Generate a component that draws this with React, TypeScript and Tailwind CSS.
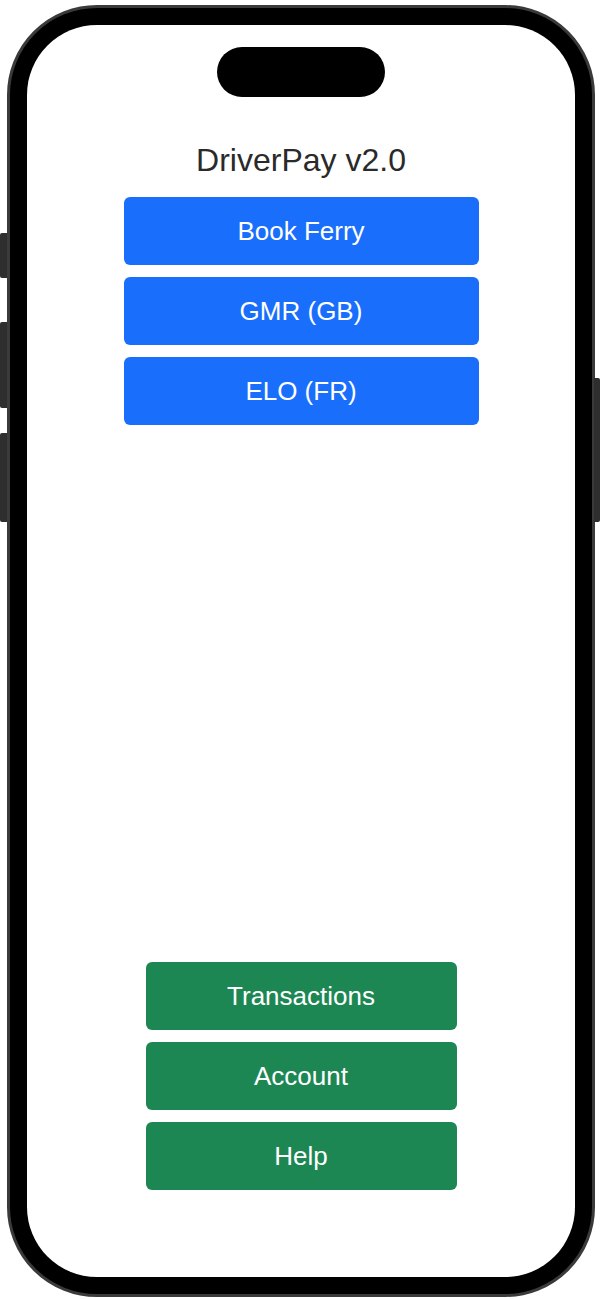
import React from "react";

const font = { fontFamily: '"Liberation Sans", Arial, sans-serif' };

function Btn({ label, color, width }: { label: string; color: string; width: string }) {
  return (
    <div
      className={`${width} ${color} h-[68px] rounded-[6px] flex items-center justify-center text-white text-[26px] leading-none`}
    >
      {label}
    </div>
  );
}

export default function App() {
  return (
    <div className="relative w-[600px] h-[1299px] bg-white overflow-hidden" style={font}>
      {/* side buttons */}
      <div className="absolute left-0 top-[233px] w-[7px] h-[45px] bg-[#2e2e2e] rounded-l-[2px]" />
      <div className="absolute left-0 top-[322px] w-[7px] h-[86px] bg-[#2e2e2e] rounded-l-[2px]" />
      <div className="absolute left-0 top-[433px] w-[7px] h-[89px] bg-[#2e2e2e] rounded-l-[2px]" />
      <div className="absolute right-0 top-[378px] w-[6px] h-[144px] bg-[#2e2e2e] rounded-r-[2px]" />

      <div className="ml-[7px] mt-[5px] w-[588px] h-[1292px] rounded-[90px] bg-black border-[3px] border-[#3a3a3a] p-[17px]">
        <div className="w-full h-full bg-white rounded-[70px] flex flex-col items-center">
          <div className="mt-[22px] w-[168px] h-[50px] rounded-full bg-black" />
          <div className="mt-[44px] text-[32px] leading-[38px] text-[#2a2a2a]">DriverPay v2.0</div>
          <div className="mt-[18px] flex flex-col gap-[12px]">
            <Btn label="Book Ferry" color="bg-[#1a6efc]" width="w-[355px]" />
            <Btn label="GMR (GB)" color="bg-[#1a6efc]" width="w-[355px]" />
            <Btn label="ELO (FR)" color="bg-[#1a6efc]" width="w-[355px]" />
          </div>
          <div className="flex-1" />
          <div className="mb-[87px] flex flex-col gap-[12px]">
            <Btn label="Transactions" color="bg-[#1d8754]" width="w-[311px]" />
            <Btn label="Account" color="bg-[#1d8754]" width="w-[311px]" />
            <Btn label="Help" color="bg-[#1d8754]" width="w-[311px]" />
          </div>
        </div>
      </div>
    </div>
  );
}
